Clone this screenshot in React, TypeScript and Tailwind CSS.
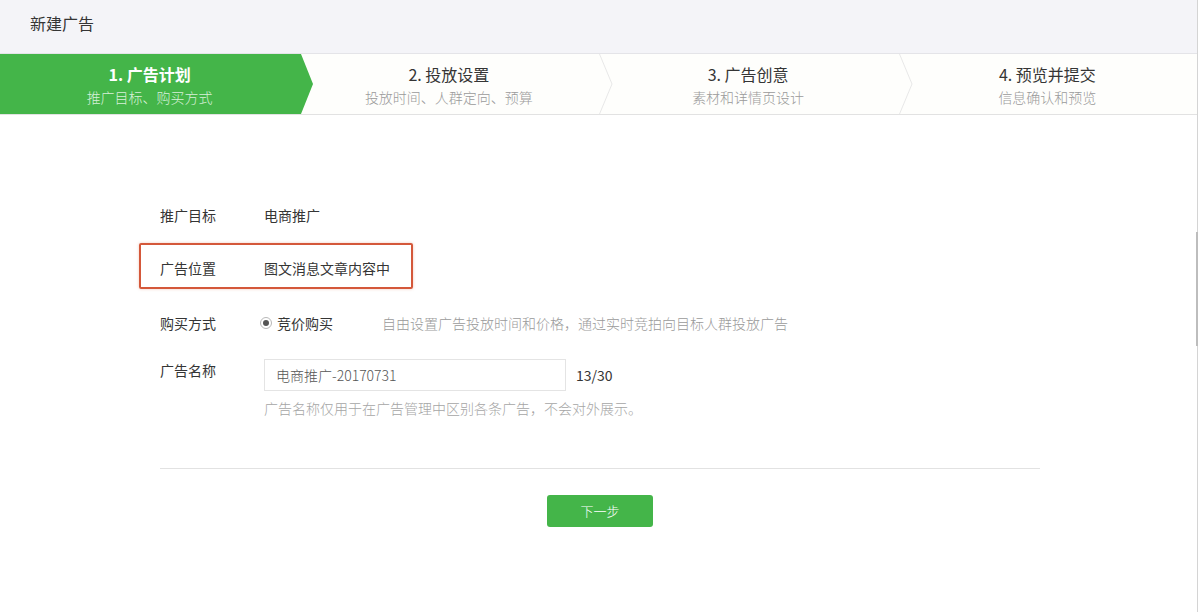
import * as React from "react"

const steps = [
  { title: "1. 广告计划", sub: "推广目标、购买方式" },
  { title: "2. 投放设置", sub: "投放时间、人群定向、预算" },
  { title: "3. 广告创意", sub: "素材和详情页设计" },
  { title: "4. 预览并提交", sub: "信息确认和预览" },
]

function Step({ title, sub, active, last }: { title: string; sub: string; active: boolean; last: boolean }) {
  return (
    <div className="relative w-[300px] h-full flex flex-col items-center justify-center pt-[2px]">
      {active && (
        <svg className="absolute left-0 top-0 h-[60px] w-[314px]" viewBox="0 0 314 60" preserveAspectRatio="none">
          <polygon points="0,0 301,0 313,30 301,60 0,60" fill="#44b549" />
        </svg>
      )}
      {!active && !last && (
        <svg className="absolute left-[300px] top-0 h-[60px] w-[14px]" viewBox="0 0 14 60">
          <polyline points="0.5,0 13,30 0.5,60" fill="none" stroke="#e8e8e8" strokeWidth="1" />
        </svg>
      )}
      <div className={`relative text-[16px] leading-[22px] ${active ? "text-white font-bold" : "text-[#353535]"}`}>{title}</div>
      <div className={`relative text-[14px] leading-[20px] mt-[2px] font-light ${active ? "text-[#d8f0d9]" : "text-[#9a9a9a]"}`}>{sub}</div>
    </div>
  )
}

function Row({ label, children, className = "" }: { label: string; children: React.ReactNode; className?: string }) {
  return (
    <div className={`flex ${className}`}>
      <div className="w-[104px] shrink-0 text-[#353535]">{label}</div>
      <div className="flex-1">{children}</div>
    </div>
  )
}

export default function App() {
  return (
    <div
      className="relative w-[1201px] h-[612px] bg-white overflow-hidden text-[14px]"
      style={{ fontFamily: '"Noto Sans CJK SC", "Liberation Sans", sans-serif' }}
    >
      <div className="w-[1198px] h-full border-r border-[#d4d4d4]">
        {/* header */}
        <div className="h-[54px] bg-[#f4f4f8] border-b border-[#e4e4e8] flex items-center pl-[30px] pb-[7px]">
          <span className="text-[16px] text-[#353535]">新建广告</span>
        </div>

        {/* steps */}
        <div className="h-[61px] flex border-b border-[#e2e2e2] bg-[#fefefc]">
          {steps.map((s, i) => (
            <Step key={s.title} title={s.title} sub={s.sub} active={i === 0} last={i === steps.length - 1} />
          ))}
        </div>

        {/* form */}
        <div className="pt-[88px] px-[160px]">
          <div className="w-[880px]">
            <Row label="推广目标" className="leading-[24px]">
              <span className="text-[#353535]">电商推广</span>
            </Row>

            <div className="relative mt-[29px]">
              <div className="absolute left-[-21px] top-[-13px] w-[274px] h-[46px] border-2 border-[#d4583a] rounded-[2px] shadow-[0_0_3px_rgba(212,88,58,0.35)]" />
              <Row label="广告位置" className="leading-[24px]">
                <span className="text-[#353535]">图文消息文章内容中</span>
              </Row>
            </div>

            <Row label="购买方式" className="leading-[24px] mt-[31px]">
              <div className="flex items-center">
                <span className="w-[12px] h-[12px] rounded-full border border-[#b8b8b8] flex items-center justify-center ml-[-4px] mr-[5px]">
                  <span className="w-[6px] h-[6px] rounded-full bg-[#555]" />
                </span>
                <span className="text-[#353535]">竞价购买</span>
                <span className="ml-[49px] text-[#9a9a9a] font-light">自由设置广告投放时间和价格，通过实时竞拍向目标人群投放广告</span>
              </div>
            </Row>

            <Row label="广告名称" className="mt-[23px] leading-[24px]">
              <div className="flex items-center mt-[1px]">
                <div className="w-[302px] h-[32px] border border-[#e4e4e4] flex items-center px-[11px] text-[#555] font-light">
                  电商推广-20170731
                </div>
                <span className="ml-[10px] text-[#353535]">13/30</span>
              </div>
              <div className="mt-[5px] text-[#a5a5a5] font-light">广告名称仅用于在广告管理中区别各条广告，不会对外展示。</div>
            </Row>

            <div className="mt-[48px] border-t border-[#e2e2e2]" />

            <div className="flex justify-center pt-[26px]">
              <button className="w-[106px] h-[32px] rounded-[3px] bg-[#44b549] text-white text-[13px] font-light">下一步</button>
            </div>
          </div>
        </div>
      </div>
      <div className="absolute right-[3px] top-[232px] w-[2px] h-[114px] bg-[#bdbdbd]" />
    </div>
  )
}
